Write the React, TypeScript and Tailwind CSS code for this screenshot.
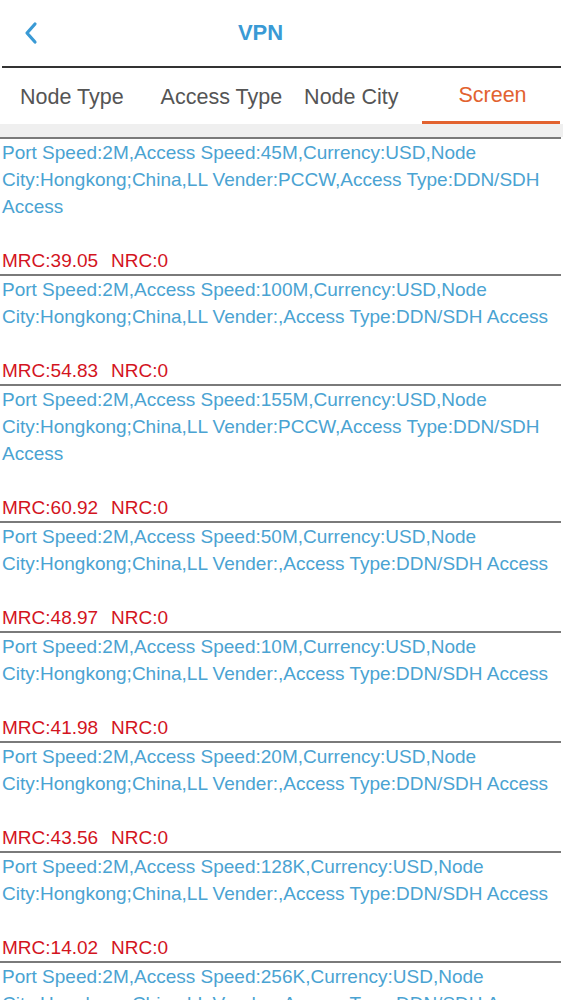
import React from "react";

const items = [
  { text: "Port Speed:2M,Access Speed:45M,Currency:USD,Node City:Hongkong;China,LL Vender:PCCW,Access Type:DDN/SDH Access", mrc: "39.05" },
  { text: "Port Speed:2M,Access Speed:100M,Currency:USD,Node City:Hongkong;China,LL Vender:,Access Type:DDN/SDH Access", mrc: "54.83" },
  { text: "Port Speed:2M,Access Speed:155M,Currency:USD,Node City:Hongkong;China,LL Vender:PCCW,Access Type:DDN/SDH Access", mrc: "60.92" },
  { text: "Port Speed:2M,Access Speed:50M,Currency:USD,Node City:Hongkong;China,LL Vender:,Access Type:DDN/SDH Access", mrc: "48.97" },
  { text: "Port Speed:2M,Access Speed:10M,Currency:USD,Node City:Hongkong;China,LL Vender:,Access Type:DDN/SDH Access", mrc: "41.98" },
  { text: "Port Speed:2M,Access Speed:20M,Currency:USD,Node City:Hongkong;China,LL Vender:,Access Type:DDN/SDH Access", mrc: "43.56" },
  { text: "Port Speed:2M,Access Speed:128K,Currency:USD,Node City:Hongkong;China,LL Vender:,Access Type:DDN/SDH Access", mrc: "14.02" },
  { text: "Port Speed:2M,Access Speed:256K,Currency:USD,Node City:Hongkong;China,LL Vender:,Access Type:DDN/SDH Access", mrc: "12.00" },
];

export default function App() {
  return (
    <div className="w-[563px] h-[1000px] overflow-hidden bg-white" style={{ fontFamily: '"Liberation Sans", Arial, sans-serif' }}>
      <div className="relative h-[66px] flex items-center justify-center">
        <svg className="absolute left-[23px] top-[21px]" width="16" height="24" viewBox="0 0 16 24" fill="none">
          <path d="M12 3 L4 12 L12 21" stroke="#3a9ad5" strokeWidth="3.2" strokeLinecap="round" strokeLinejoin="round" />
        </svg>
        <span className="text-[22px] font-bold text-[#3a9ad5] mt-[-2px] mr-[42px]">VPN</span>
      </div>
      <div className="mx-[2px] h-[2px] bg-[#333]" />
      <div className="flex h-[56px] text-[21.5px] text-[#555] whitespace-nowrap">
        <div className="flex-1 flex items-center pl-[20px] pt-[2px]">
          <span>Node Type</span>
          <span className="ml-[37px]">Access Type</span>
          <span className="ml-[22px]">Node City</span>
        </div>
        <div className="w-[141px] flex flex-col">
          <div className="flex-1 flex items-center justify-center text-[#e2622f] pt-[2px]">Screen</div>
          <div className="h-[3px] bg-[#e2622f] mr-[3px]" />
        </div>
      </div>
      <div className="h-[13px] bg-[#efefef]" />
      <div className="h-[2px] bg-[#7a7a7a] mr-[2px]" />
      <div>
        {items.map((it, i) => (
          <div key={i} className="border-b-2 border-[#7a7a7a] mr-[2px] pl-[2px] pr-[2px] text-[19px] leading-[27px]">
            <div className="text-[#4aa3d2]">{it.text}</div>
            <div className="h-[27px]" />
            <div className="text-[#d3141e]">
              MRC:{it.mrc}
              <span className="ml-[13px]">NRC:0</span>
            </div>
          </div>
        ))}
      </div>
    </div>
  );
}
